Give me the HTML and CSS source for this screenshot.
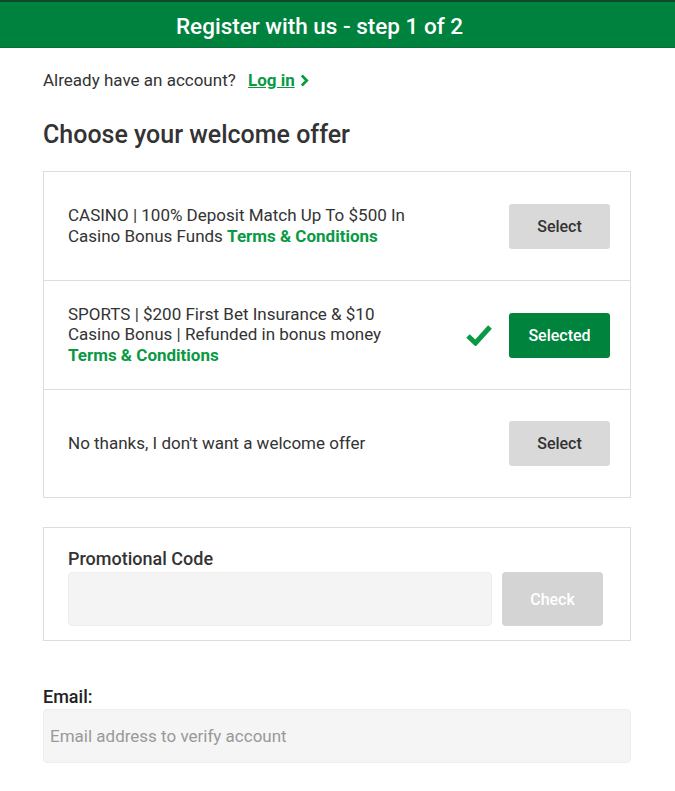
FILE: index.html
```html
<!DOCTYPE html>
<html>
<head>
<meta charset="utf-8">
<link rel="stylesheet" href="styles.css">
</head>
<body>
<header class="topbar">Register with us - step 1 of 2</header>
<main class="content">
  <p class="login-line">Already have an account? <a class="login-link" href="#"><span class="u">Log in</span><svg class="chev" viewBox="0 0 10 14" width="9" height="13"><path d="M2 1.5 L7.5 7 L2 12.5" fill="none" stroke="#0a9a44" stroke-width="3"/></svg></a></p>
  <h1 class="title">Choose your welcome offer</h1>
  <div class="offers">
    <div class="offer">
      <div class="offer-text">CASINO | 100% Deposit Match Up To $500 In Casino Bonus Funds <a class="tc" href="#">Terms &amp; Conditions</a></div>
      <button class="btn btn-select">Select</button>
    </div>
    <div class="offer">
      <div class="offer-text">SPORTS | $200 First Bet Insurance &amp; $10 Casino Bonus | Refunded in bonus money <a class="tc" href="#">Terms &amp; Conditions</a></div>
      <svg class="check" viewBox="0 0 26 22" width="26" height="22"><path d="M2 12 L9.5 19 L24 3" fill="none" stroke="#0a9a44" stroke-width="5"/></svg>
      <button class="btn btn-selected">Selected</button>
    </div>
    <div class="offer">
      <div class="offer-text">No thanks, I don't want a welcome offer</div>
      <button class="btn btn-select">Select</button>
    </div>
  </div>
  <div class="promo">
    <div class="promo-label">Promotional Code</div>
    <div class="promo-row">
      <div class="promo-input"></div>
      <button class="btn btn-check">Check</button>
    </div>
  </div>
  <div class="email-label">Email:</div>
  <div class="email-input">Email address to verify account</div>
</main>
</body>
</html>
```
FILE: styles.css
```css
html, body {
  margin: 0;
  padding: 0;
  background: #fff;
}
body {
  font-family: Roboto, "Noto Sans", sans-serif;
  color: #333;
}
.topbar {
  height: 45px;
  border-top: 2px solid #0b4a2a;
  border-bottom: 1px solid #0a6e3a;
  background: #00823f;
  color: #fff;
  font-size: 22.5px;
  font-weight: 500;
  text-align: center;
  line-height: 49px;
  padding-right: 36px;
  box-sizing: content-box;
  overflow: hidden;
}
.content {
  padding: 0 44px 0 43px;
}
.login-line {
  margin: 22px 0 0;
  font-size: 17px;
  line-height: 20px;
  color: #333;
}
.login-link {
  margin-left: 8px;
  color: #0a9a44;
  font-weight: 700;
  text-decoration: none;
}
.login-link .u {
  text-decoration: underline;
}
.chev {
  margin-left: 5px;
  vertical-align: -1px;
}
.title {
  margin: 30px 0 0;
  font-size: 25px;
  font-weight: 500;
  line-height: 30px;
  color: #333;
}
.offers {
  margin-top: 21px;
  border: 1px solid #ddd;
}
.offer {
  display: flex;
  align-items: center;
  height: 108px;
  padding: 0 20px 0 24px;
  border-top: 1px solid #ddd;
}
.offer:first-child {
  border-top: none;
}
.offer:last-child {
  height: 107px;
}
.offer-text {
  flex: 1;
  font-size: 17px;
  line-height: 20.5px;
  padding-right: 70px;
  margin-top: -1px;
}
.tc {
  color: #0a9a44;
  font-weight: 700;
  text-decoration: none;
}
.check {
  margin-right: 17px;
}
.btn {
  width: 101px;
  height: 45px;
  border: none;
  border-radius: 3px;
  font-family: Roboto, sans-serif;
  font-size: 16px;
  font-weight: 500;
  padding: 0;
  flex: none;
}
.btn-select {
  background: #d9d9d9;
  color: #333;
}
.btn-selected {
  background: #00843d;
  color: #fff;
}
.promo {
  margin-top: 29px;
  border: 1px solid #ddd;
  padding: 20px 27px 14px 24px;
}
.promo-label {
  font-size: 18px;
  font-weight: 500;
  line-height: 22px;
  color: #333;
  margin-bottom: 2px;
}
.promo-row {
  display: flex;
  gap: 10px;
}
.promo-input {
  flex: 1;
  height: 54px;
  background: #f4f4f4;
  border: 1px solid #eee;
  border-radius: 4px;
  box-sizing: border-box;
}
.btn-check {
  height: 54px;
  background: #d4d4d4;
  color: #fff;
  border-radius: 4px;
}
.email-label {
  margin-top: 45px;
  font-size: 18px;
  font-weight: 500;
  line-height: 22px;
  color: #222;
}
.email-input {
  margin-top: 1px;
  height: 54px;
  background: #f5f5f5;
  border: 1px solid #eee;
  border-radius: 4px;
  box-sizing: border-box;
  padding-left: 6px;
  line-height: 52px;
  font-size: 17px;
  color: #999;
}
```
